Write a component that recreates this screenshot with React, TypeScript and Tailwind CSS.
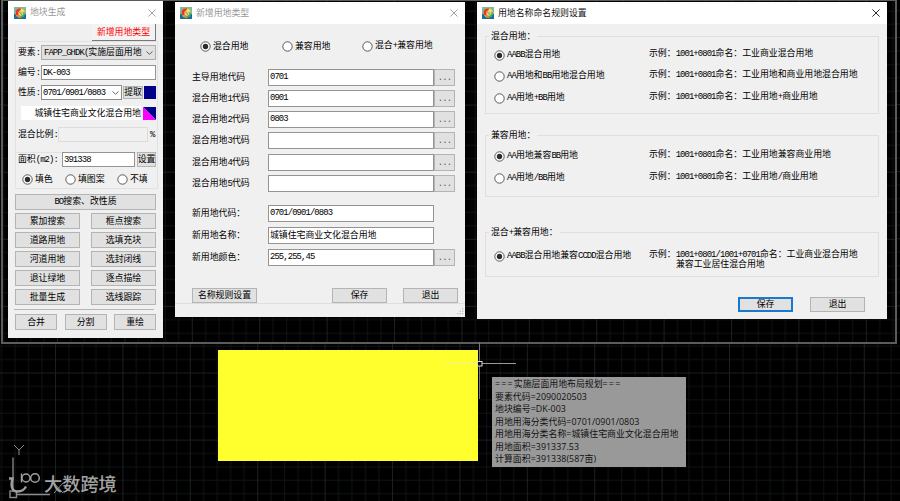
import React, { type ReactNode } from "react";
import clsx from "clsx";

const ROOT_FONT = 'font-["Liberation_Sans","Noto_Sans_CJK_SC",sans-serif]';

/** Bitmap-style text: Latin runs take exactly half of a full-width cell. */
function T({ children }: { children: string }) {
  const runs = children.match(/[\x20-\x7e]+|[^\x20-\x7e]+/g) ?? [];
  return (
    <span className="whitespace-pre">
      {runs.map((run, i) =>
        run.charCodeAt(0) < 127 ? (
          <span key={i} className='font-["Liberation_Mono",monospace] tracking-[-0.89px]'>{run}</span>
        ) : (
          <span key={i} className='font-["Noto_Sans_CJK_SC",sans-serif]'>{run}</span>
        ),
      )}
    </span>
  );
}

function Row({ className, children }: { className?: string; children?: ReactNode }) {
  return <div className={clsx("flex shrink-0 items-center", className)}>{children}</div>;
}

function Btn({ className, children }: { className?: string; children: string }) {
  return (
    <button
      className={clsx(
        "flex shrink-0 items-center justify-center border bg-[#e1e1e1] leading-none",
        className ?? "",
        !className?.includes("border-[#") && "border-[#b4b4b4]",
      )}
    >
      <T>{children}</T>
    </button>
  );
}

function Field({ className, children }: { className?: string; children?: string }) {
  return (
    <div className={clsx("flex shrink-0 border border-[#949494] bg-white pl-px leading-[13px]", className)}>
      {children && <T>{children}</T>}
    </div>
  );
}

function Radio({ on, className, children }: { on?: boolean; className?: string; children: string }) {
  return (
    <label className={clsx("flex shrink-0 items-center gap-[2px]", className)}>
      <svg className="size-[11px] shrink-0" viewBox="0 0 11 11">
        <circle cx="5.5" cy="5.5" r="4.7" fill="#fff" stroke="#484848" strokeWidth="0.9" />
        {on && <circle cx="5.5" cy="5.5" r="2.7" fill="#2c2c2c" />}
      </svg>
      <T>{children}</T>
    </label>
  );
}

function AppIcon() {
  return (
    <svg className="size-[12px] shrink-0" viewBox="0 0 12 12">
      <rect width="12" height="12" fill="#7fb8a4" />
      <path d="M0 7h12v5H0z" fill="#1a6f9e" />
      <circle cx="6.2" cy="5.9" r="4.7" fill="#f4d63a" />
      <path d="M2 3.5C3 1.8 5 1 7 1.3L6.5 4 4.5 8 2.5 8.5C1.4 7 1.3 5 2 3.5z" fill="#e23a28" />
      <path d="M2.5 8.5L5 7l2 1.5v2C5 10.8 3.4 10 2.5 8.5z" fill="#f08a28" />
      <path d="M6.5 5.5h4.4C11 8 9.5 10 7 10.5z" fill="#3da548" />
      <path d="M8.8 3.9C7 2.6 4.8 4 4.8 6s2.4 3 4 1.6V6H7" fill="none" stroke="#fff6d0" strokeWidth="0.8" />
    </svg>
  );
}

function TitleBar({ title, active, className }: { title: string; active?: boolean; className?: string }) {
  return (
    <div className={clsx("flex shrink-0 items-center bg-white", className, active ? "text-[#111]" : "text-[#999]")}>
      <AppIcon />
      <span className='ml-[4px] font-["Noto_Sans_CJK_SC",sans-serif]'>{title}</span>
      <svg className="ml-auto size-[8px]" viewBox="0 0 8 8">
        <path d="M.4.4l7.2 7.2M7.6.4L.4 7.6" stroke="currentColor" strokeWidth="0.9" />
      </svg>
    </div>
  );
}

function Chevron() {
  return (
    <svg className="ml-auto h-[4px] w-[7px] shrink-0" viewBox="0 0 7 4">
      <path d="M.5.5l3 2.8 3-2.8" fill="none" stroke="#555" strokeWidth="0.9" />
    </svg>
  );
}

const TOOL_ROWS = [
  ["累加搜索", "框点搜索"],
  ["道路用地", "选填充块"],
  ["河道用地", "选封闭线"],
  ["退让绿地", "逐点描绘"],
  ["批量生成", "选线跟踪"],
];

function ParcelWindow() {
  return (
    <section className="absolute left-[8px] top-px flex h-[337px] w-[155px] flex-col bg-[#f0f0f0]">
      <TitleBar title="地块生成" className="h-[23px] pl-[6px] pr-[7px]" />
      <button className="ml-[84px] flex h-[17px] w-[64px] items-center justify-center border-b border-r border-[#777] bg-[#f3f3f3] text-[#f00]">
        <T>新增用地类型</T>
      </button>
      <div className="ml-[7px] flex h-[112px] w-[143px] shrink-0 flex-col border border-[#e2e2e2] pl-[2px]">
        <Row className="mt-[3px] h-[15px]">
          <span className="w-[23px]"><T>要素:</T></span>
          <div className="flex h-[15px] w-[115px] items-center border border-[#adadad] bg-[#e1e1e1] pl-[2px] pr-[2px]">
            <T>FAPP_GHDK(实施层面用地</T>
            <Chevron />
          </div>
        </Row>
        <Row className="mt-[5px] h-[15px]">
          <span className="w-[23px]"><T>编号:</T></span>
          <Field className="h-[15px] w-[115px]">DK-003</Field>
        </Row>
        <Row className="mt-[5px] h-[15px]">
          <span className="w-[23px]"><T>性质:</T></span>
          <div className="flex h-[15px] w-[81px] items-center border border-[#8c8c8c] bg-white pl-px pr-[2px]">
            <T>0701/0901/0803</T>
            <Chevron />
          </div>
          <Btn className="ml-px h-[13px] w-[20px]">提取</Btn>
          <span className="ml-px h-[13px] w-[12px] bg-[#00008b]" />
        </Row>
        <Row className="ml-[3px] mt-[6px] h-[14px]">
          <div className="flex h-[14px] w-[120px] items-center justify-end bg-white"><T>城镇住宅商业文化混合用地</T></div>
          <svg className="ml-[2px] size-[13px]" viewBox="0 0 13 13">
            <path d="M0 0h13v13z" fill="#00008b" />
            <path d="M0 0v13h13z" fill="#f0f" />
          </svg>
        </Row>
        <Row className="mt-[7px] h-[15px]">
          <span className="w-[40px]"><T>混合比例:</T></span>
          <div className="h-[15px] w-[90px] border border-[#dcdcdc]" />
          <span className="ml-[2px]"><T>%</T></span>
        </Row>
      </div>
      <div className="-mt-px ml-[7px] flex h-[37px] w-[143px] shrink-0 flex-col border border-[#e2e2e2] pl-[2px]">
        <Row className="-mt-px h-[15px]">
          <span className="w-[44px]"><T>面积(m2):</T></span>
          <Field className="h-[15px] w-[73px] bg-[#f0f0f0]">391338</Field>
          <Btn className="ml-[2px] h-[15px] w-[19px]">设置</Btn>
        </Row>
        <Row className="ml-[4px] mt-[7px] h-[11px]">
          <Radio on className="w-[43px]">填色</Radio>
          <Radio className="w-[52px]">填图案</Radio>
          <Radio>不填</Radio>
        </Row>
      </div>
      <Btn className="ml-[7px] mt-[5px] h-[16px] w-[141px]">BO搜索、改性质</Btn>
      <div className="ml-[7px] mt-[3px] flex w-[141px] flex-col gap-[3px]">
        {TOOL_ROWS.map(([a, b]) => (
          <div key={a} className="flex justify-between">
            <Btn className="h-[16px] w-[65px]">{a}</Btn>
            <Btn className="h-[16px] w-[65px]">{b}</Btn>
          </div>
        ))}
      </div>
      <div className="ml-[6px] mt-[4px] h-px w-[140px] shrink-0 bg-[#b5b5b5]" />
      <div className="ml-[7px] mt-[4px] flex w-[141px] justify-between">
        <Btn className="h-[16px] w-[42px]">合并</Btn>
        <Btn className="h-[16px] w-[42px]">分割</Btn>
        <Btn className="h-[16px] w-[42px]">重绘</Btn>
      </div>
    </section>
  );
}

const CODE_ROWS: [string, string, string][] = [
  ["主导用地代码", "0701", "mt-[13px]"],
  ["混合用地1代码", "0901", "mt-[4px]"],
  ["混合用地2代码", "0803", "mt-[4px]"],
  ["混合用地3代码", "", "mt-[4px]"],
  ["混合用地4代码", "", "mt-[5px]"],
  ["混合用地5代码", "", "mt-[4px]"],
  ["新用地代码：", "0701/0901/0803", "mt-[13px]"],
  ["新用地名称：", "城镇住宅商业文化混合用地", "mt-[5px]"],
  ["新用地颜色：", "255,255,45", "mt-[5px]"],
];

function NewTypeWindow() {
  return (
    <section className="absolute left-[175px] top-[2px] flex h-[315px] w-[290px] flex-col bg-[#f0f0f0]">
      <TitleBar title="新增用地类型" className="h-[22px] pl-[5px] pr-[7px]" />
      <Row className="ml-[25px] mt-[16px] h-[12px]">
        <Radio on className="w-[82px]">混合用地</Radio>
        <Radio className="w-[80px]">兼容用地</Radio>
        <Radio>混合+兼容用地</Radio>
      </Row>
      <div className="-mt-px ml-[17px] flex flex-col pt-[5px]">
        {CODE_ROWS.map(([label, value, gap], i) => (
          <Row key={label} className={clsx("h-[17px]", gap)}>
            <span className="w-[76px]"><T>{label}</T></span>
            <Field className="h-[17px] w-[166px]">{value}</Field>
            {(i < 6 || i === 8) && <Btn className="h-[17px] w-[21px] text-[#555]">...</Btn>}
          </Row>
        ))}
      </div>
      <Row className="ml-[17px] mt-[22px] h-[15px]">
        <Btn className="h-[15px] w-[65px]">名称规则设置</Btn>
        <Btn className="ml-[75px] h-[15px] w-[55px]">保存</Btn>
        <Btn className="ml-[16px] h-[15px] w-[55px]">退出</Btn>
      </Row>
      <div className="mt-auto flex h-[14px] shrink-0 items-end justify-end border-t border-[#dedede] pb-[2px] pr-[1px]">
        <svg className="size-[7px]" viewBox="0 0 7 7" fill="#bbb">
          <path d="M5 0h1.3v1.3H5zM2.6 2.5h1.3v1.3H2.6zM5 2.5h1.3v1.3H5zM.2 5h1.3v1.3H.2zM2.6 5h1.3v1.3H2.6zM5 5h1.3v1.3H5z" />
        </svg>
      </div>
    </section>
  );
}

function Group({ title, className, children }: { title: string; className?: string; children: ReactNode }) {
  return (
    <div className={clsx("ml-[8px] flex w-[394px] shrink-0 flex-col border border-[#dfdfdf]", className)}>
      <div className="-mt-[7px] ml-[3px] flex h-[13px] shrink-0 items-center self-start bg-[#f0f0f0] px-[2px]"><T>{title}</T></div>
      {children}
    </div>
  );
}

function Rule({ on, name, example, className }: { on?: boolean; name: string; example: string; className?: string }) {
  return (
    <Row className={clsx("ml-[8px] h-[12px]", className)}>
      <Radio on={on} className="w-[155px]">{name}</Radio>
      <span className="-mt-[3px]"><T>{example}</T></span>
    </Row>
  );
}

function NamingWindow() {
  return (
    <section className="absolute left-[477px] top-[2px] flex h-[317px] w-[410px] flex-col bg-[#f0f0f0]">
      <TitleBar active title="用地名称命名规则设置" className="h-[22px] pl-[5px] pr-[7px]" />
      <Group title="混合用地：" className="mt-[12px] h-[78px]">
        <Rule on className="mt-[6px]" name="AABB混合用地" example="示例：1001+0801命名：工业商业混合用地" />
        <Rule className="mt-[9px]" name="AA用地和BB用地混合用地" example="示例：1001+0801命名：工业用地和商业用地混合用地" />
        <Rule className="mt-[10px]" name="AA用地+BB用地" example="示例：1001+0801命名：工业用地+商业用地" />
      </Group>
      <Group title="兼容用地：" className="mt-[21px] h-[62px]">
        <Rule on className="mt-[8px]" name="AA用地兼容BB用地" example="示例：1001+0801命名：工业用地兼容商业用地" />
        <Rule className="mt-[10px]" name="AA用地/BB用地" example="示例：1001+0801命名：工业用地/商业用地" />
      </Group>
      <Group title="混合+兼容用地：" className="mt-[35px] h-[45px]">
        <div className="ml-[8px] mt-[11px] flex h-[22px]">
          <Radio on className="h-[12px] w-[155px]">AABB混合用地兼容CCDD混合用地</Radio>
          <div className="flex flex-col">
            <Row className="h-[9px]"><T>示例：1001+0801/1001+0701命名：工业商业混合用地</T></Row>
            <Row className="ml-[27px] h-[10px]"><T>兼容工业居住混合用地</T></Row>
          </div>
        </div>
      </Group>
      <Row className="ml-[261px] mt-[20px] h-[15px]">
        <Btn className="h-[15px] w-[55px] border-2 border-[#1979d0]">保存</Btn>
        <Btn className="ml-[17px] h-[15px] w-[55px]">退出</Btn>
      </Row>
    </section>
  );
}

function GridLines({ id, x, y }: { id: string; x: number; y: number }) {
  return (
    <svg className="absolute inset-0 size-full">
      <defs>
        <pattern id={id} x={x} y={y} width="67.4" height="67.1" patternUnits="userSpaceOnUse">
          <path
            d="M13.9 0v68M27.4 0v68M40.9 0v68M54.3 0v68M0 13.9h68M0 27.3h68M0 40.7h68M0 54.1h68"
            stroke="#0f1213"
            strokeWidth="1"
          />
          <path d="M.5 0v68M0 .5h68" stroke="#1c1f20" strokeWidth="1" />
        </pattern>
      </defs>
      <rect width="100%" height="100%" fill={`url(#${id})`} />
    </svg>
  );
}

const INFO = [
  "要素代码=2090020503",
  "地块编号=DK-003",
  "用地用海分类代码=0701/0901/0803",
  "用地用海分类名称=城镇住宅商业文化混合用地",
  "用地面积=391337.53",
  "计算面积=391338(587亩)",
];

export default function App() {
  return (
    <main className={clsx("relative h-[501px] w-[900px] overflow-hidden bg-black text-[8.9px] leading-none text-black", ROOT_FONT)}>
      <GridLines id="lower" x={55} y={372.5} />
      <div className="absolute -top-px left-px h-[345px] w-[896px] overflow-hidden border-2 border-[#5c5c5c] bg-black">
        <GridLines id="upper" x={54} y={372} />
      </div>

      <ParcelWindow />
      <NewTypeWindow />
      <NamingWindow />

      <div className="absolute left-[218px] top-[350px] h-[111px] w-[260px] bg-[#ffff2d]" />

      <svg className="absolute left-[440px] top-[340px] h-[64px] w-[80px]" viewBox="0 0 80 64" fill="none">
        <path d="M39.5 2v19M39.5 26v33" stroke="#777" />
        <path d="M5 23.5h33" stroke="#f2f28c" />
        <path d="M42 23.5h34" stroke="#999" />
        <rect x="37.5" y="21.5" width="4.5" height="4.5" stroke="#ddd" />
      </svg>

      <div className='absolute left-[492px] top-[377px] flex h-[90px] w-[194px] flex-col bg-[#999] pl-[3px] pt-[1px] font-["Open_Sans","Noto_Sans_CJK_SC",sans-serif] leading-[12.5px] text-[#111]'>
        <span className="whitespace-nowrap">
          <span className="tracking-[1.2px]">===</span>实施层面用地布局规划<span className="tracking-[1.2px]">===</span>
        </span>
        {INFO.map((line) => (
          <span key={line} className="whitespace-nowrap tracking-[0.04px]">{line}</span>
        ))}
      </div>

      <svg className="absolute left-[6px] top-[440px] h-[61px] w-[60px]" viewBox="0 0 60 61" fill="none" stroke="#8b8b8b">
        <path d="M8 5l5 5 5-5M13 10v5" />
        <path d="M7 17.5v34" strokeWidth="1.3" />
        <path d="M10 54.5h34" strokeWidth="1.3" />
        <rect x="4" y="51" width="6.5" height="6.5" strokeWidth="1.4" />
        <path d="M48 43l9 10M57 43l-9 10" />
        <g stroke="#a0a0a0">
          <path d="M3 38.5h3.5c-2 7-1 13 5 13 4 0 7-2 8.5-5" strokeWidth="2.3" />
          <path d="M15.5 33.5v9" strokeWidth="1.4" />
          <circle cx="20" cy="38" r="4" strokeWidth="1.4" />
          <circle cx="29" cy="38" r="4.3" strokeWidth="1.5" />
        </g>
      </svg>
      <div className='absolute left-[44px] top-[474px] font-["Noto_Sans_CJK_SC",sans-serif] text-[18.2px] font-medium leading-[19px] text-[#a3a3a3]'>
        大数跨境
      </div>
    </main>
  );
}
